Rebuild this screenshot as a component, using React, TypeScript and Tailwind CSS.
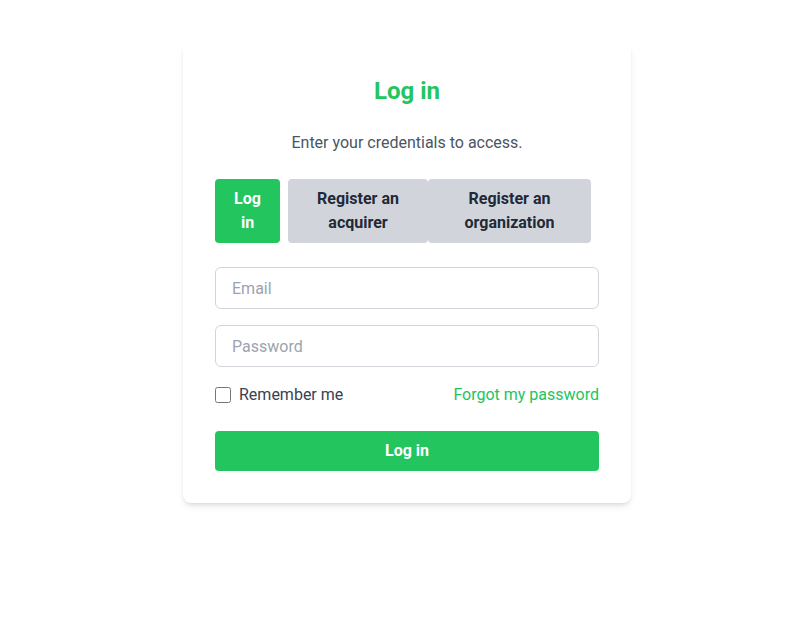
import React, { useState } from "react";

export default function App() {
  const [tab, setTab] = useState("login");
  const tabs = [
    { id: "login", label: "Log in", width: "w-[65px] mr-2" },
    { id: "acquirer", label: "Register an acquirer", width: "w-[140px]" },
    { id: "organization", label: "Register an organization", width: "w-[163px]" },
  ];

  return (
    <div className="min-h-screen bg-white pt-[43px] font-['Roboto',sans-serif]">
      <div className="ml-[183px] w-[448px] rounded-lg bg-white p-8 shadow-md">
        <h1 className="mb-6 text-center text-2xl font-bold text-[#22c55e]">Log in</h1>
        <p className="mb-6 text-center text-[#4b5563]">Enter your credentials to access.</p>

        <div className="mb-6 flex">
          {tabs.map((t) => (
            <button
              key={t.id}
              onClick={() => setTab(t.id)}
              className={`h-16 rounded px-3 text-center font-bold leading-6 ${t.width} ${
                tab === t.id ? "bg-[#22c55e] text-white" : "bg-[#d1d5db] text-[#1f2937]"
              }`}
            >
              {t.label}
            </button>
          ))}
        </div>

        <input
          type="email"
          placeholder="Email"
          className="mb-4 h-[42px] w-full rounded-md border border-[#d1d5db] px-4 text-[#374151] placeholder:text-[#9ca3af] focus:outline-none"
        />
        <input
          type="password"
          placeholder="Password"
          className="mb-4 h-[42px] w-full rounded-md border border-[#d1d5db] px-4 text-[#374151] placeholder:text-[#9ca3af] focus:outline-none"
        />

        <div className="mb-6 flex items-center justify-between">
          <label className="flex items-center text-[#374151]">
            <input type="checkbox" className="mr-2 h-4 w-4" />
            Remember me
          </label>
          <a className="cursor-pointer text-[#22c55e]">Forgot my password</a>
        </div>

        <button className="h-10 w-full rounded bg-[#22c55e] font-bold text-white">Log in</button>
      </div>
    </div>
  );
}
